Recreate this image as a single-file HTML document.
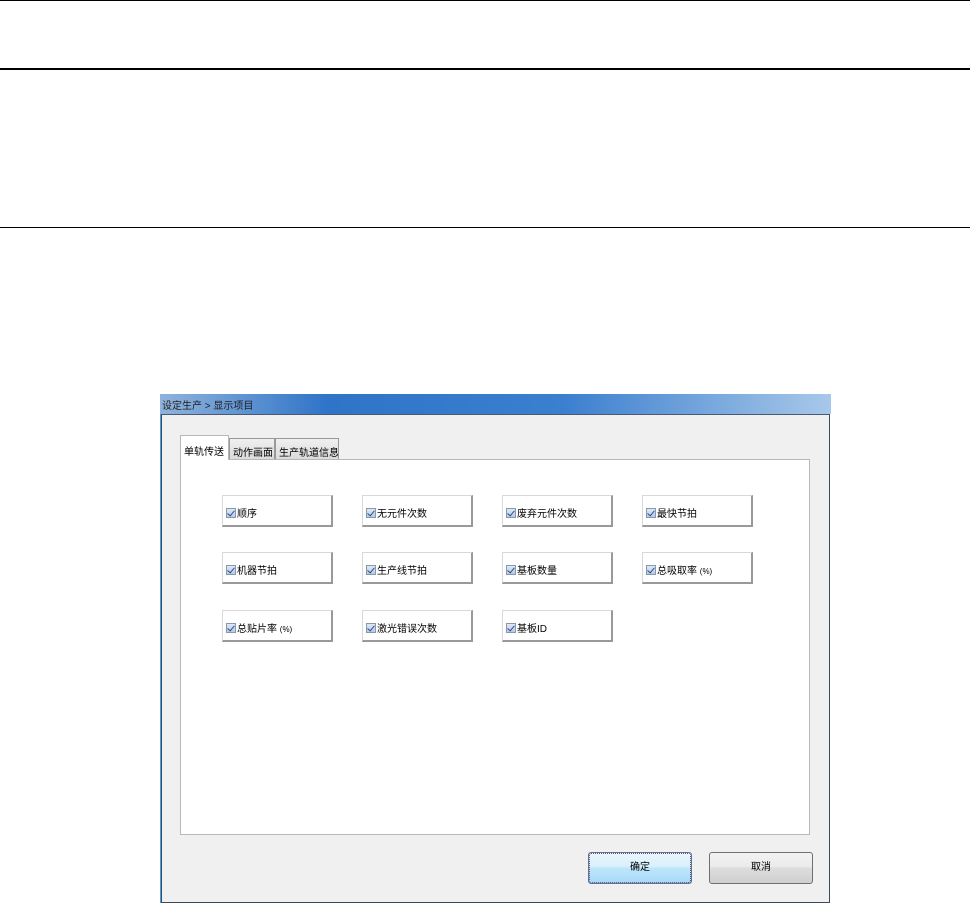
<!DOCTYPE html>
<html><head><meta charset="utf-8"><style>
*{margin:0;padding:0;box-sizing:border-box}
body{width:970px;height:904px;background:#fff;position:relative;overflow:hidden;font-family:"Liberation Sans","Noto Sans CJK SC",sans-serif;font-size:11px;color:#000}
.hl{position:absolute;left:0;width:970px;background:#000}
.abs{position:absolute}
.title{left:160px;top:394px;width:671px;height:20px;background:linear-gradient(90deg,#8fb3dc 0%,#2f74c8 25%,#3b7fcf 60%,#8db6e2 90%,#a8c8ea 100%);color:#222;padding:3px 0 0 2px;font-size:10px}
.win{left:161px;top:414px;width:669px;height:489px;background:#f0f0f0;border:1px solid #3a4a5c;border-top:1px solid #4a5a70;box-shadow:-1px 0 0 #4aa0e0}
.panel{left:180px;top:459px;width:630px;height:376px;background:#fff;border:1px solid #b8b8b8}
.tab{position:absolute;top:438px;height:21px;border:1px solid #999;border-bottom:none;background:linear-gradient(#f0f0f0,#dcdcdc);padding:5px 0 0 3px;font-size:10px;white-space:nowrap;overflow:hidden}
.tab.on{top:435px;height:25px;background:#fff;border-color:#b8b8b8;z-index:2;padding-top:7px}
.cb{position:absolute;width:111px;height:32px;background:#fff;border:1px solid #d8d8d8;border-right:2px solid #999;border-bottom:2px solid #999;padding:9px 0 0 3px;font-size:10px;white-space:nowrap}
.cb i{display:inline-block;width:10px;height:10px;border:1px solid #8899aa;background:linear-gradient(#dfe8f4,#b9cbe4);vertical-align:-1px;margin-right:1px;position:relative}
.cb i:after{content:"";position:absolute;left:2px;top:0px;width:3px;height:6px;border:solid #2a4a9a;border-width:0 1.5px 1.5px 0;transform:rotate(40deg)}
.btn{position:absolute;top:852px;width:104px;height:32px;border:1px solid #707070;border-radius:3px;text-align:center;line-height:30px;font-size:10px}
</style></head><body>
<div class="hl" style="top:0;height:1px"></div>
<div class="hl" style="top:68px;height:2px"></div>
<div class="hl" style="top:227px;height:1px"></div>
<div class="abs title">设定生产 &gt; 显示项目</div>
<div class="abs win"></div>
<div class="abs panel"></div>
<div class="tab on" style="left:180px;width:49px">单轨传送</div>
<div class="tab" style="left:229px;width:46px">动作画面</div>
<div class="tab" style="left:275px;width:64px">生产轨道信息</div>
<div class="cb" style="left:222px;top:495px"><i></i>顺序</div>
<div class="cb" style="left:362px;top:495px"><i></i>无元件次数</div>
<div class="cb" style="left:502px;top:495px"><i></i>废弃元件次数</div>
<div class="cb" style="left:642px;top:495px"><i></i>最快节拍</div>
<div class="cb" style="left:222px;top:552px"><i></i>机器节拍</div>
<div class="cb" style="left:362px;top:552px"><i></i>生产线节拍</div>
<div class="cb" style="left:502px;top:552px"><i></i>基板数量</div>
<div class="cb" style="left:642px;top:552px"><i></i>总吸取率 <span style="font-size:8px">(%)</span></div>
<div class="cb" style="left:222px;top:610px"><i></i>总贴片率 <span style="font-size:8px">(%)</span></div>
<div class="cb" style="left:362px;top:610px"><i></i>激光错误次数</div>
<div class="cb" style="left:502px;top:610px"><i></i>基板ID</div>
<div class="btn" style="left:588px;background:linear-gradient(#eaf6fd 0%,#d9f0fc 45%,#bee6fd 50%,#a7d9f5 100%);border-color:#3c7fb1;outline:1px dotted #a33;outline-offset:-2px">确定</div>
<div class="btn" style="left:709px;background:linear-gradient(#f2f2f2 0%,#ebebeb 45%,#dddddd 50%,#cfcfcf 100%)">取消</div>
</body></html>
